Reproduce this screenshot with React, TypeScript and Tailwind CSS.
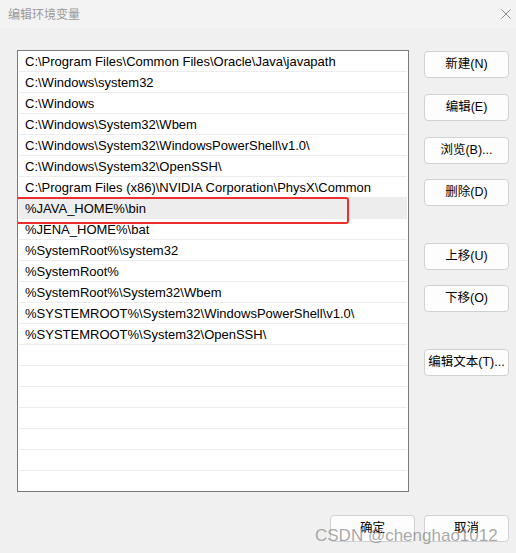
import React from 'react';

const paths = [
  'C:\\Program Files\\Common Files\\Oracle\\Java\\javapath',
  'C:\\Windows\\system32',
  'C:\\Windows',
  'C:\\Windows\\System32\\Wbem',
  'C:\\Windows\\System32\\WindowsPowerShell\\v1.0\\',
  'C:\\Windows\\System32\\OpenSSH\\',
  'C:\\Program Files (x86)\\NVIDIA Corporation\\PhysX\\Common',
  '%JAVA_HOME%\\bin',
  '%JENA_HOME%\\bat',
  '%SystemRoot%\\system32',
  '%SystemRoot%',
  '%SystemRoot%\\System32\\Wbem',
  '%SYSTEMROOT%\\System32\\WindowsPowerShell\\v1.0\\',
  '%SYSTEMROOT%\\System32\\OpenSSH\\',
];

const TOTAL_ROWS = 21;
const SELECTED = 7;

const font = { fontFamily: '"Noto Sans CJK SC", "Liberation Sans", sans-serif' };

const DlgButton: React.FC<{ label: string; className?: string }> = ({ label, className = '' }) => (
  <button
    className={`h-[27px] w-[85px] rounded-[4px] border border-[#d1d1d1] bg-[#fdfdfd] text-[12.5px] text-black leading-none ${className}`}
  >
    {label}
  </button>
);

export default function App() {
  const rows = Array.from({ length: TOTAL_ROWS }, (_, i) => paths[i] ?? '');

  return (
    <div
      className="relative h-[553px] w-[516px] overflow-hidden bg-[#f0f0f0] select-none"
      style={{ fontFamily: '"Liberation Sans", "Noto Sans CJK SC", sans-serif' }}
    >
      {/* title bar */}
      <div className="flex h-[28px] items-center justify-between bg-[#f3f3f3] pl-2 pr-[3px]">
        <span className="text-[12px] text-[#9a9a9a]" style={font}>编辑环境变量</span>
        <svg width="12" height="12" viewBox="0 0 12 12" className="mr-[1px]">
          <path d="M1.5 1.5 L10.5 10.5 M10.5 1.5 L1.5 10.5" stroke="#8a8a8a" strokeWidth="1" />
        </svg>
      </div>

      <div className="flex pt-[22px] pl-[17px]">
        {/* list box */}
        <div className="relative h-[442px] w-[392px] overflow-hidden border border-[#7a7a7a] bg-white px-px">
          {rows.map((text, i) => (
            <div
              key={i}
              className={`flex h-[21px] items-center border-b border-[#ececec] pl-[6px] pt-px text-[13px] text-black ${
                i === SELECTED ? 'bg-[#ededed]' : ''
              }`}
            >
              <span className="whitespace-nowrap">{text}</span>
            </div>
          ))}
          {/* red annotation box */}
          <div className="absolute left-[-2px] top-[146px] h-[27px] w-[333px] rounded-[3px] border-2 border-[#ee2d2d]" />
        </div>

        {/* side buttons */}
        <div className="ml-[15px] flex flex-col pt-px">
          <DlgButton label="新建(N)" />
          <DlgButton label="编辑(E)" className="mt-[16px]" />
          <DlgButton label="浏览(B)..." className="mt-[16px]" />
          <DlgButton label="删除(D)" className="mt-[15px]" />
          <DlgButton label="上移(U)" className="mt-[37px]" />
          <DlgButton label="下移(O)" className="mt-[15px]" />
          <DlgButton label="编辑文本(T)..." className="mt-[37px]" />
        </div>
      </div>

      {/* footer */}
      <div className="flex justify-end gap-[9px] pt-[23px] pr-[7px]">
        <DlgButton label="确定" />
        <DlgButton label="取消" />
      </div>

      {/* watermark */}
      <div
        className="pointer-events-none absolute left-[315px] top-[523px] text-[17px] text-[#8c8c8c]/75"
        style={{ fontFamily: '"Liberation Sans", sans-serif' }}
      >
        CSDN @chenghao1012
      </div>
    </div>
  );
}
